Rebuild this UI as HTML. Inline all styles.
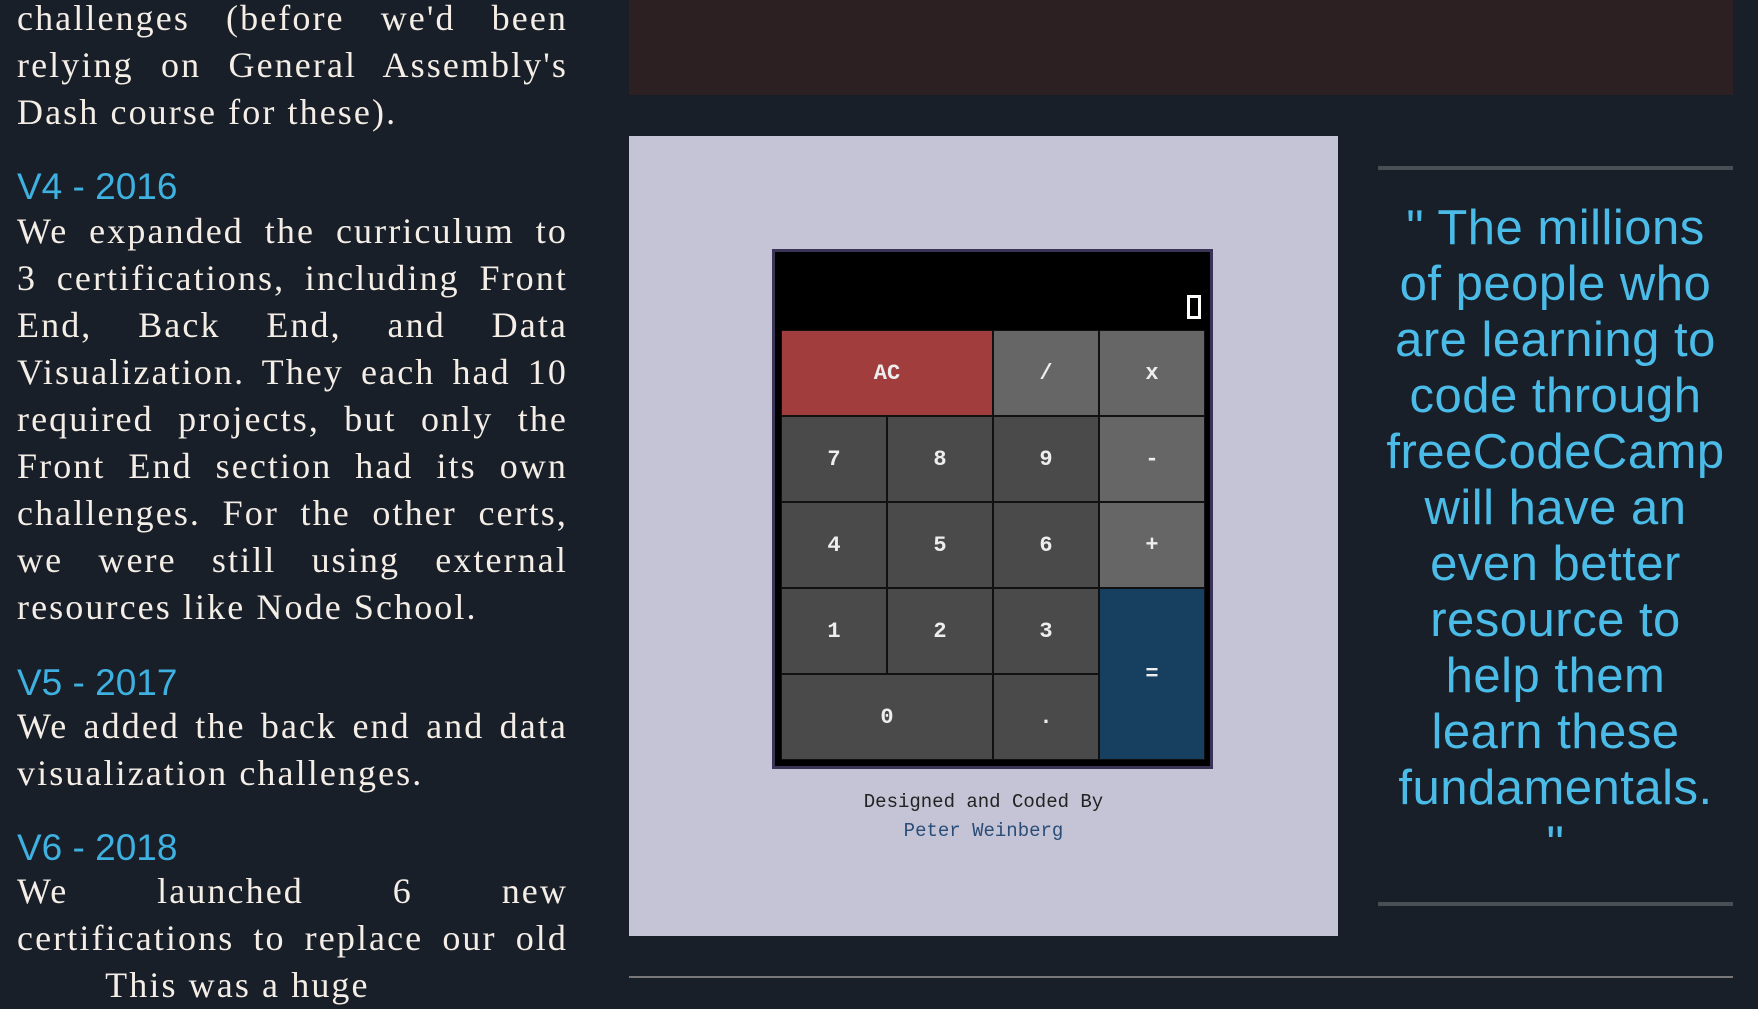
<!DOCTYPE html>
<html><head><meta charset="utf-8"><style>
*{margin:0;padding:0;box-sizing:border-box}
body{width:1758px;height:978px;background:#181f29;position:relative;overflow:hidden;font-family:"Liberation Serif",serif}
.l{position:absolute;left:17px;width:551px;font-size:36px;letter-spacing:2.1px;color:#f5eee6;line-height:47px;height:47px;white-space:nowrap;text-align:justify;text-align-last:justify;overflow:visible}
.l.e{text-align-last:left}
.h{position:absolute;left:17px;font-family:"Liberation Sans",sans-serif;font-size:37px;color:#3eb1e0;line-height:44px}
.q{position:absolute;left:1370px;width:371px;text-align:center;font-family:"Liberation Sans",sans-serif;font-size:49px;letter-spacing:0.5px;color:#4bbbe8;line-height:56px;white-space:nowrap}
.b{position:absolute;display:flex;align-items:center;justify-content:center;font-family:"Liberation Mono",monospace;font-weight:bold;font-size:22px;color:#eee;border:1px solid #111}
</style></head><body>
<div class="l" style="top:-5px">challenges (before we'd been</div>
<div class="l" style="top:42px">relying on General Assembly's</div>
<div class="l e" style="top:89px">Dash course for these).</div>
<div class="h" style="top:165px">V4 - 2016</div>
<div class="l" style="top:208px">We expanded the curriculum to</div>
<div class="l" style="top:255px">3 certifications, including Front</div>
<div class="l" style="top:302px">End, Back End, and Data</div>
<div class="l" style="top:349px">Visualization. They each had 10</div>
<div class="l" style="top:396px">required projects, but only the</div>
<div class="l" style="top:443px">Front End section had its own</div>
<div class="l" style="top:490px">challenges. For the other certs,</div>
<div class="l" style="top:537px">we were still using external</div>
<div class="l e" style="top:584px">resources like Node School.</div>
<div class="h" style="top:661px">V5 - 2017</div>
<div class="l" style="top:703px">We added the back end and data</div>
<div class="l e" style="top:750px">visualization challenges.</div>
<div class="h" style="top:826px">V6 - 2018</div>
<div class="l" style="top:868px">We launched 6 new</div>
<div class="l" style="top:915px">certifications to replace our old</div>
<div class="l e" style="top:962px">&nbsp; &nbsp; &nbsp; &nbsp; This was a huge</div>

<div style="position:absolute;left:629px;top:0;width:1104px;height:95px;background:#2d2022"></div>
<div style="position:absolute;left:629px;top:136px;width:709px;height:800px;background:#c4c4d6"></div>
<div style="position:absolute;left:772px;top:249px;width:441px;height:520px;background:#000;border:3px solid #3a3457"></div>
<div style="position:absolute;left:1187px;top:295px;width:14px;height:24px;border:3px solid #fff"></div>
<div class="b" style="left:781px;top:330px;width:212px;height:86px;background:#a13d3d">AC</div>
<div class="b" style="left:993px;top:330px;width:106px;height:86px;background:#666">/</div>
<div class="b" style="left:1099px;top:330px;width:106px;height:86px;background:#666">x</div>
<div class="b" style="left:781px;top:416px;width:106px;height:86px;background:#4a4a4a">7</div>
<div class="b" style="left:887px;top:416px;width:106px;height:86px;background:#4a4a4a">8</div>
<div class="b" style="left:993px;top:416px;width:106px;height:86px;background:#4a4a4a">9</div>
<div class="b" style="left:1099px;top:416px;width:106px;height:86px;background:#666">-</div>
<div class="b" style="left:781px;top:502px;width:106px;height:86px;background:#4a4a4a">4</div>
<div class="b" style="left:887px;top:502px;width:106px;height:86px;background:#4a4a4a">5</div>
<div class="b" style="left:993px;top:502px;width:106px;height:86px;background:#4a4a4a">6</div>
<div class="b" style="left:1099px;top:502px;width:106px;height:86px;background:#666">+</div>
<div class="b" style="left:781px;top:588px;width:106px;height:86px;background:#4a4a4a">1</div>
<div class="b" style="left:887px;top:588px;width:106px;height:86px;background:#4a4a4a">2</div>
<div class="b" style="left:993px;top:588px;width:106px;height:86px;background:#4a4a4a">3</div>
<div class="b" style="left:1099px;top:588px;width:106px;height:172px;background:#173f5f">=</div>
<div class="b" style="left:781px;top:674px;width:212px;height:86px;background:#4a4a4a">0</div>
<div class="b" style="left:993px;top:674px;width:106px;height:86px;background:#4a4a4a">.</div>
<div style="position:absolute;left:629px;width:709px;top:788px;text-align:center;font-family:'Liberation Mono',monospace;font-size:19px;line-height:29px;color:#222">Designed and Coded By<br><span style="color:#2a4d78">Peter Weinberg</span></div>

<div style="position:absolute;left:1378px;top:166px;width:355px;height:4px;background:#4a4e55"></div>
<div style="position:absolute;left:1378px;top:902px;width:355px;height:4px;background:#4a4e55"></div>
<div class="q" style="top:200px">" The millions</div>
<div class="q" style="top:256px">of people who</div>
<div class="q" style="top:312px">are learning to</div>
<div class="q" style="top:368px">code through</div>
<div class="q" style="top:424px">freeCodeCamp</div>
<div class="q" style="top:480px">will have an</div>
<div class="q" style="top:536px">even better</div>
<div class="q" style="top:592px">resource to</div>
<div class="q" style="top:648px">help them</div>
<div class="q" style="top:704px">learn these</div>
<div class="q" style="top:760px">fundamentals.</div>
<div class="q" style="top:816px">"</div>
<div style="position:absolute;left:629px;top:976px;width:1104px;height:2px;background:#777"></div>
</body></html>
